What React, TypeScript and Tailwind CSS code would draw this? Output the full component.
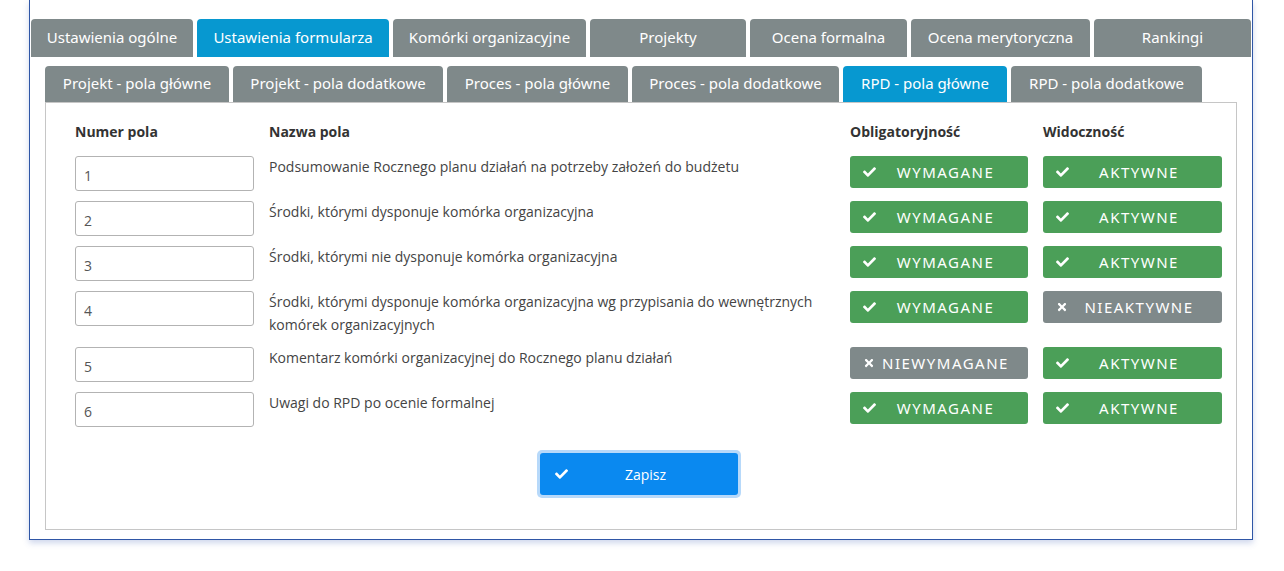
import { FaCheck, FaTimes } from "react-icons/fa";

const topTabs = [
  { label: "Ustawienia ogólne", w: "w-[162px]", active: false },
  { label: "Ustawienia formularza", w: "w-[192px]", active: true },
  { label: "Komórki organizacyjne", w: "w-[193px]", active: false },
  { label: "Projekty", w: "w-[156px]", active: false },
  { label: "Ocena formalna", w: "w-[157px]", active: false },
  { label: "Ocena merytoryczna", w: "w-[179px]", active: false },
  { label: "Rankingi", w: "w-[157px]", active: false },
];

const subTabs = [
  { label: "Projekt - pola główne", w: "w-[184px]", active: false },
  { label: "Projekt - pola dodatkowe", w: "w-[210px]", active: false },
  { label: "Proces - pola główne", w: "w-[181px]", active: false },
  { label: "Proces - pola dodatkowe", w: "w-[207px]", active: false },
  { label: "RPD - pola główne", w: "w-[164px]", active: true },
  { label: "RPD - pola dodatkowe", w: "w-[191px]", active: false },
];

const rows = [
  { num: "1", name: "Podsumowanie Rocznego planu działań na potrzeby założeń do budżetu", required: true, visible: true },
  { num: "2", name: "Środki, którymi dysponuje komórka organizacyjna", required: true, visible: true },
  { num: "3", name: "Środki, którymi nie dysponuje komórka organizacyjna", required: true, visible: true },
  {
    num: "4",
    name: "Środki, którymi dysponuje komórka organizacyjna wg przypisania do wewnętrznych komórek organizacyjnych",
    required: true,
    visible: false,
  },
  { num: "5", name: "Komentarz komórki organizacyjnej do Rocznego planu działań", required: false, visible: true },
  { num: "6", name: "Uwagi do RPD po ocenie formalnej", required: true, visible: true },
];

function Toggle({ on, onLabel, offLabel }: { on: boolean; onLabel: string; offLabel: string }) {
  return (
    <div
      className={`relative flex h-[32px] items-center justify-center rounded-[3px] pl-[13px] font-['Noto_Sans',sans-serif] text-[15px] uppercase tracking-[1.5px] text-white ${
        on ? "bg-[#4b9f58]" : "bg-[#7f898a]"
      }`}
    >
      <span className="absolute left-[13px] top-1/2 -translate-y-1/2">
        {on ? <FaCheck className="h-[13px] w-[13px]" /> : <FaTimes className="h-[12px] w-[12px]" />}
      </span>
      {on ? onLabel : offLabel}
    </div>
  );
}

export default function App() {
  return (
    <div className="min-h-screen bg-white pl-[29px] font-['Open_Sans',sans-serif]">
      <div className="w-[1224px] border-x border-b border-[#2f56a6] pb-[9px] pt-[19px] shadow-[0_3px_6px_rgba(60,90,180,0.25)]">
        <nav className="flex gap-[4px] pl-px font-['Noto_Sans',sans-serif]">
          {topTabs.map((t) => (
            <div
              key={t.label}
              className={`flex h-[38px] items-center justify-center rounded-t-[4px] pb-[2px] text-[15px] text-white ${t.w} ${
                t.active ? "bg-[#0798d0]" : "bg-[#7f898a]"
              }`}
            >
              {t.label}
            </div>
          ))}
        </nav>

        <div className="mx-[15px] mt-[9px]">
          <nav className="flex gap-[4px] font-['Noto_Sans',sans-serif]">
            {subTabs.map((t) => (
              <div
                key={t.label}
                className={`flex h-[36px] items-center justify-center rounded-t-[4px] pb-[2px] text-[15px] text-white ${t.w} ${
                  t.active ? "bg-[#0798d0]" : "bg-[#7f898a]"
                }`}
              >
                {t.label}
              </div>
            ))}
          </nav>

          <section className="border border-[#c6c6c6] px-[29px] pb-[31px] pt-[19px]">
            <div className="grid grid-cols-[179px_566px_178px_179px] gap-x-[15px] text-[14px] font-bold leading-[20px] text-[#333]">
              <div>Numer pola</div>
              <div>Nazwa pola</div>
              <div>Obligatoryjność</div>
              <div>Widoczność</div>
            </div>

            <div className="mt-[14px] flex flex-col gap-[10px]">
              {rows.map((r) => (
                <div
                  key={r.num}
                  className="grid grid-cols-[179px_566px_178px_179px] items-start gap-x-[15px] text-[14px] text-[#444]"
                >
                  <input
                    readOnly
                    value={r.num}
                    className="h-[35px] w-[179px] rounded-[3px] border border-[#b3b3b3] px-[8px] pt-[3px] text-[14px] text-[#555] outline-none"
                  />
                  <div className="-mt-px pb-px pr-[10px] leading-[23px]">{r.name}</div>
                  <Toggle on={r.required} onLabel="Wymagane" offLabel="Niewymagane" />
                  <Toggle on={r.visible} onLabel="Aktywne" offLabel="Nieaktywne" />
                </div>
              ))}
            </div>

            <div className="mt-[23px] flex justify-center pr-[4px]">
              <div className="rounded-[5px] bg-[#b7d9fa] p-[3px]">
                <button className="relative flex h-[42px] w-[198px] items-center justify-center rounded-[3px] bg-[#0a89f0] pl-[13px] text-[14px] text-white">
                  <FaCheck className="absolute left-[15px] top-1/2 h-[13px] w-[13px] -translate-y-1/2" />
                  Zapisz
                </button>
              </div>
            </div>
          </section>
        </div>
      </div>
    </div>
  );
}
